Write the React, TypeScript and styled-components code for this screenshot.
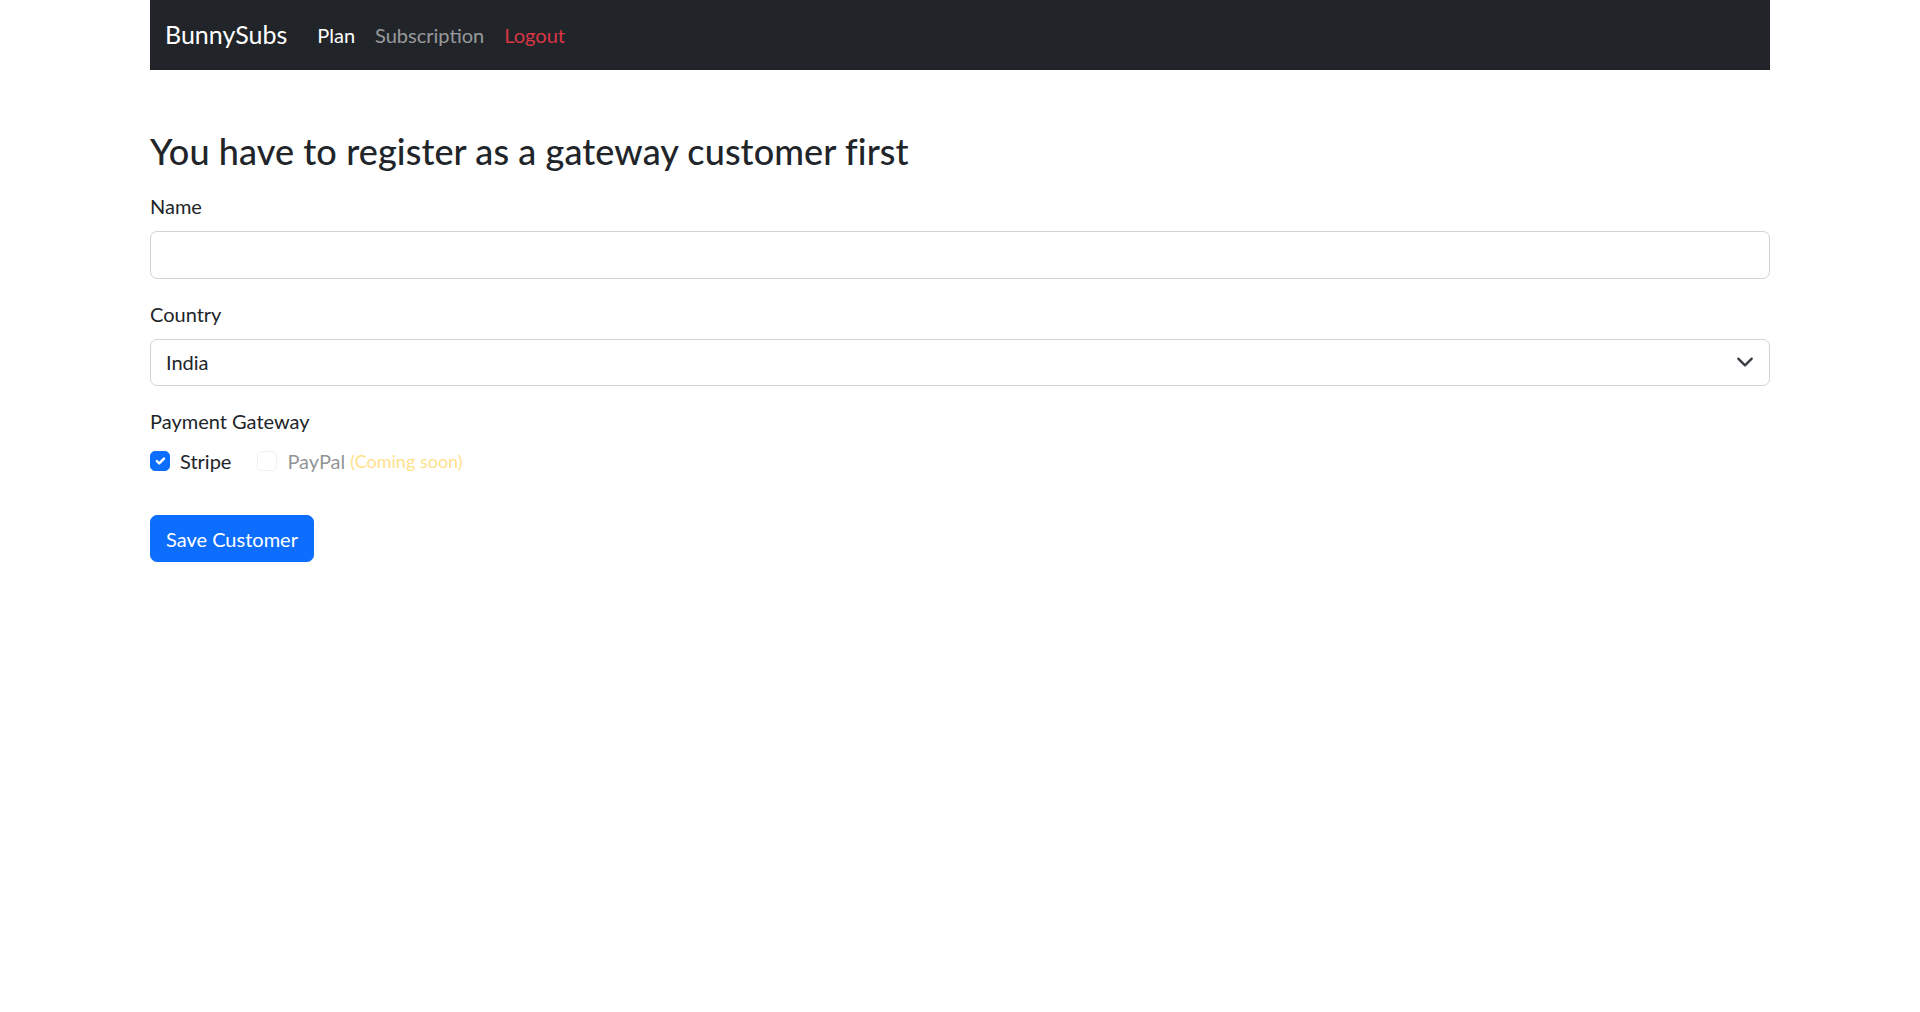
import React from 'react';
import styled, { createGlobalStyle } from 'styled-components';

const FONT = `"Segoe UI", Lato, "Noto Sans", "Liberation Sans", sans-serif`;

const GlobalStyle = createGlobalStyle`
  * { box-sizing: border-box; }
  body {
    margin: 0;
    font-family: ${FONT};
    font-size: 20px;
    line-height: 1.5;
    color: #212529;
    background: #fff;
  }
`;

const Container = styled.div`
  max-width: 1650px;
  margin: 0 auto;
  padding: 0 15px;
`;

const Navbar = styled.nav`
  background: #212529;
  padding: 10px 15px;
  display: flex;
  align-items: center;
`;

const Brand = styled.a`
  font-size: 25px;
  line-height: 37.5px;
  padding: 6px 0;
  margin-right: 20px;
  color: #fff;
  text-decoration: none;
`;

const NavList = styled.div`
  display: flex;
  align-items: center;
`;

const NavLink = styled.a<{ $tone: 'active' | 'muted' | 'danger' }>`
  padding: 10px;
  font-size: 20px;
  line-height: 30px;
  text-decoration: none;
  color: ${p =>
    p.$tone === 'active' ? '#fff' : p.$tone === 'danger' ? '#dc3545' : 'rgba(255, 255, 255, 0.55)'};
`;

const Title = styled.h3`
  margin: 60px 0 19px;
  font-size: 36px;
  font-weight: 500;
  line-height: 42px;
  letter-spacing: 0.1px;
`;

const Field = styled.div`
  margin-bottom: 20px;
`;

const Label = styled.label`
  display: block;
  margin-bottom: 10px;
`;

const Input = styled.input`
  display: block;
  width: 100%;
  height: 47.5px;
  padding: 7.5px 15px;
  font: inherit;
  color: #212529;
  border: 1px solid #ced4da;
  border-radius: 7px;
  background: #fff;
  outline: none;
`;

const SelectWrap = styled.div`
  position: relative;
`;

const Select = styled.select`
  display: block;
  width: 100%;
  height: 47.5px;
  padding: 7.5px 56px 7.5px 15px;
  font: inherit;
  color: #212529;
  border: 1px solid #ced4da;
  border-radius: 7px;
  background: #fff;
  appearance: none;
  outline: none;
`;

const Chevron = styled.svg`
  position: absolute;
  right: 16px;
  top: 50%;
  width: 18px;
  height: 18px;
  transform: translateY(-50%);
  pointer-events: none;
`;

const CheckRow = styled.div`
  display: flex;
  align-items: center;
`;

const CheckItem = styled.label<{ $disabled?: boolean }>`
  display: inline-flex;
  align-items: center;
  margin-right: 26px;
  line-height: 30px;
  color: ${p => (p.$disabled ? 'rgba(33, 37, 41, 0.5)' : '#212529')};
`;

const Box = styled.span<{ $checked?: boolean; $disabled?: boolean }>`
  display: inline-flex;
  align-items: center;
  justify-content: center;
  width: 20px;
  height: 20px;
  margin-right: 10px;
  border-radius: 5px;
  border: 1px solid ${p => (p.$checked ? '#0d6efd' : '#dee2e6')};
  background: ${p => (p.$checked ? '#0d6efd' : '#fff')};
  opacity: ${p => (p.$disabled ? 0.5 : 1)};
`;

const Soon = styled.span`
  margin-left: 5px;
  font-size: 18px;
  color: rgba(255, 193, 7, 0.5);
`;

const Button = styled.button`
  margin-top: 19px;
  padding: 7.5px 15px;
  font: inherit;
  line-height: 30px;
  color: #fff;
  background: #0d6efd;
  border: 1px solid #0d6efd;
  border-radius: 7px;
  cursor: pointer;
`;

export default function App() {
  return (
    <>
      <GlobalStyle />
      <Container>
        <Navbar>
          <Brand href="#">BunnySubs</Brand>
          <NavList>
            <NavLink $tone="active" href="#">Plan</NavLink>
            <NavLink $tone="muted" href="#">Subscription</NavLink>
            <NavLink $tone="danger" href="#">Logout</NavLink>
          </NavList>
        </Navbar>

        <Title>You have to register as a gateway customer first</Title>

        <Field>
          <Label>Name</Label>
          <Input type="text" />
        </Field>

        <Field>
          <Label>Country</Label>
          <SelectWrap>
            <Select defaultValue="IN">
              <option value="IN">India</option>
            </Select>
            <Chevron viewBox="0 0 16 16">
              <path d="m2 5 6 6 6-6" fill="none" stroke="#343a40" strokeWidth="2" strokeLinecap="round" strokeLinejoin="round" />
            </Chevron>
          </SelectWrap>
        </Field>

        <Field>
          <Label>Payment Gateway</Label>
          <CheckRow>
            <CheckItem>
              <Box $checked>
                <svg width="16" height="16" viewBox="0 0 20 20">
                  <path d="m6 10 3 3 6-6" fill="none" stroke="#fff" strokeWidth="3" strokeLinecap="round" strokeLinejoin="round" />
                </svg>
              </Box>
              Stripe
            </CheckItem>
            <CheckItem $disabled>
              <Box $disabled />
              PayPal
              <Soon>(Coming soon)</Soon>
            </CheckItem>
          </CheckRow>
        </Field>

        <Button type="button">Save Customer</Button>
      </Container>
    </>
  );
}
